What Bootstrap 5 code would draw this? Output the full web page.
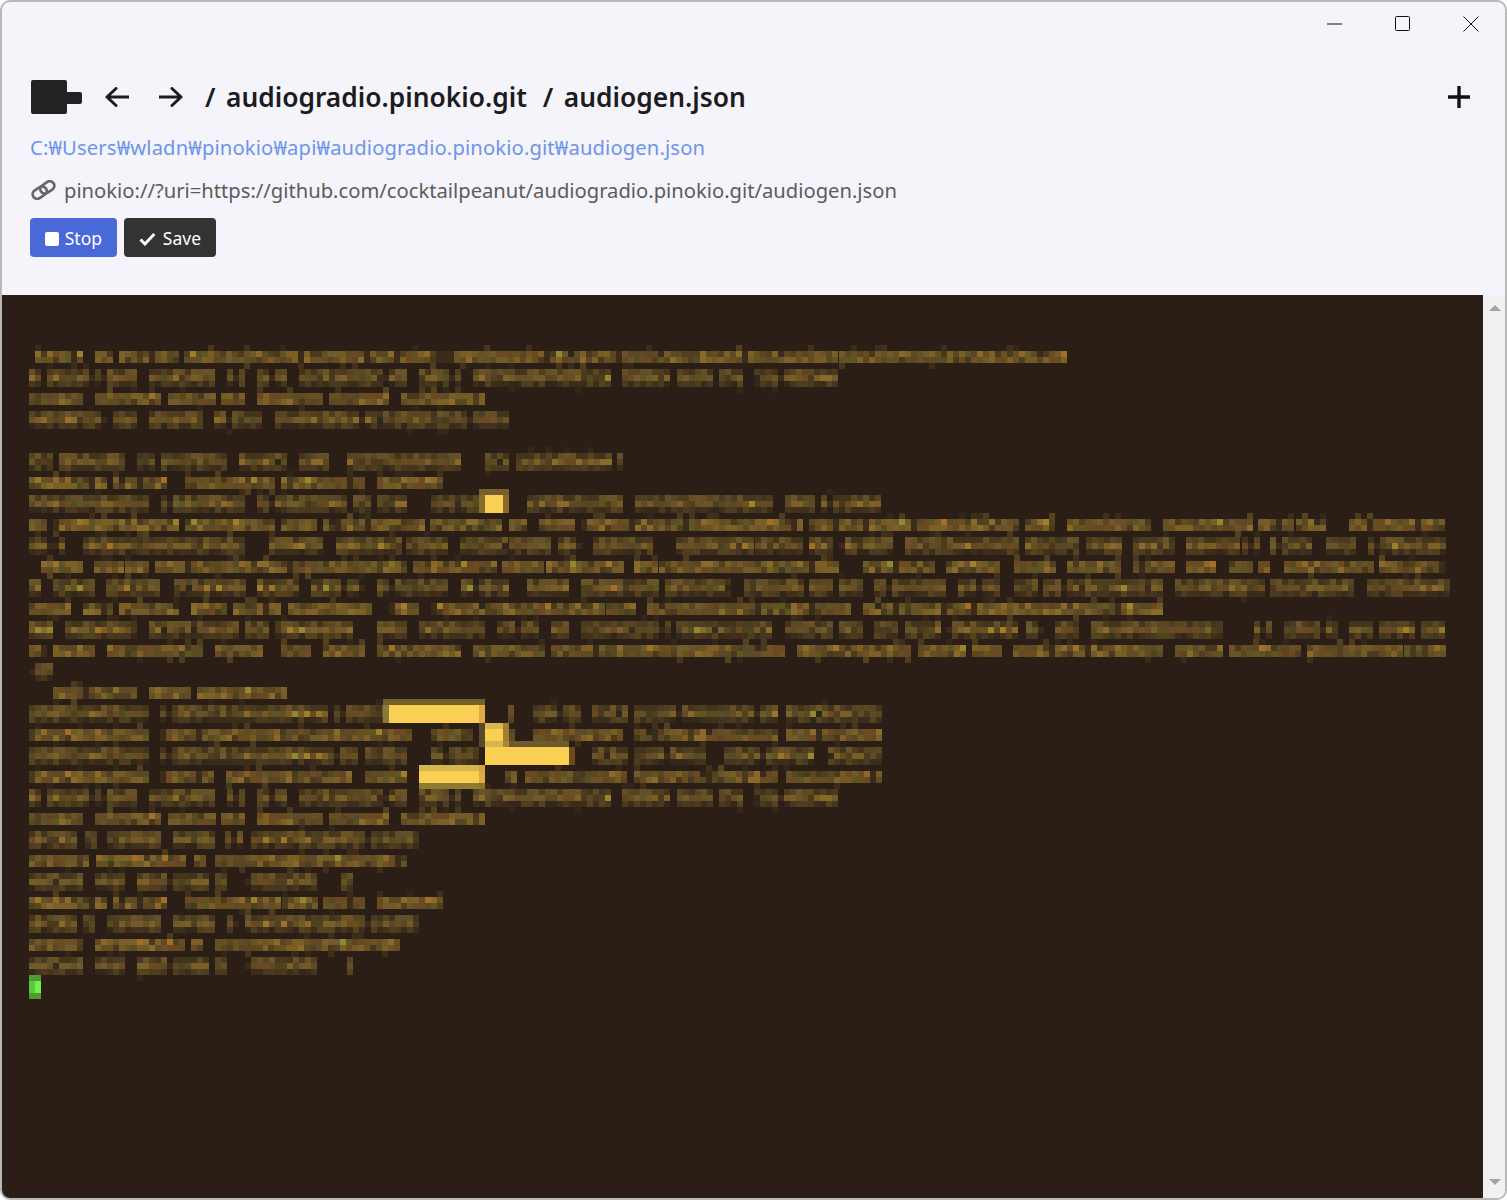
<!doctype html>
<html lang="en">
<head>
<meta charset="utf-8">
<title>audiogen.json</title>
<link href="https://cdn.jsdelivr.net/npm/bootstrap@5.3.0/dist/css/bootstrap.min.css" rel="stylesheet">
<style>
html,body{height:100%;margin:0;overflow:hidden;background:#fff}
body{font-family:"Noto Sans","Noto Sans CJK KR",sans-serif}
.win{height:1200px;border:2px solid #b9b9b9;border-radius:10px;background:#f4f4fa;overflow:hidden;position:relative}
.tick{position:absolute;background:#555;z-index:3}
.capbar{height:44px;padding-top:0}
.capbtn{width:68px;height:43px;padding:0;border:0;background:transparent}
.head{padding:16px 22px 38px 28px}
.toprow{height:70px;margin-bottom:4px}
.logo{width:51px;height:34px;margin-left:1px;flex:none}
.arrow{width:24px;height:20px;flex:none}
.arrow-a{margin-left:23px}
.arrow-b{margin-left:30px}
.crumbs{margin:0 0 0 22px;font-size:26.350px;font-weight:600;color:#1c1c1e;white-space:pre;line-height:36px}
.slash{margin-right:10.500px}
.slash-two{margin-left:16px}
.addbtn{width:22px;height:22px;margin-right:13px}
.pathlink{display:block;font-size:20.200px;letter-spacing:.14px;line-height:28px;color:#6e95ea;text-decoration:none;margin-top:-3px}
.urirow{margin-top:15px;height:28px;color:#5c5c5c;font-size:20.200px}
.chain{width:25px;height:20px;margin:0 8px 0 1px;flex:none}
.actions{margin-top:14px;gap:7px}
.act{height:39px;font-size:17.500px;line-height:1;border:0;border-radius:4px;color:#fff;padding:3px 15px 0;display:flex;align-items:center}
.act-stop{background:#4a69d8;width:87px}
.act-stop:hover{background:#4a69d8;color:#fff}
.act-save{background:#333;width:92px}
.act-save:hover{background:#333;color:#fff}
.sq{width:14px;height:14px;background:#fff;border-radius:2px;margin-right:6px}
.chk{width:17px;height:14px;margin-right:7px}
.termwrap{height:903px}
.term{background:#2b1e17;flex:1 1 auto;overflow:hidden}
.term svg{display:block;width:1481px;height:903px}
.sbar{width:22px;background:#f1f1f1;flex:none}
.sarrow{width:12px;height:6px;margin:0 0 0 6px}
.sarrow-up{margin-top:10px}
.sarrow-down{margin-bottom:13px}
</style>
</head>
<body>
<div class="win d-flex flex-column">
  <span class="tick" style="left:37px;top:-2px;width:1px;height:2px"></span>
  <span class="tick" style="left:304px;top:-2px;width:1px;height:2px"></span>
  <span class="tick" style="left:361px;top:-2px;width:1px;height:2px"></span>
  <span class="tick" style="left:-2px;top:35px;width:2px;height:1px"></span>
  <span class="tick" style="left:-2px;top:41px;width:2px;height:1px"></span>
  <span class="tick" style="left:-2px;top:47px;width:2px;height:1px"></span>
  <span class="tick" style="left:-2px;top:274px;width:2px;height:3px"></span>

  <div class="capbar d-flex justify-content-end">
    <button class="capbtn d-flex align-items-center justify-content-center" aria-label="Minimize"><svg width="16" height="16" viewBox="0 0 16 16"><path d="M0 8h15" stroke="#111" fill="none"/></svg></button>
    <button class="capbtn d-flex align-items-center justify-content-center" aria-label="Maximize"><svg width="16" height="16" viewBox="0 0 16 16"><rect x=".5" y=".5" width="14" height="14" rx="1" stroke="#111" fill="none"/></svg></button>
    <button class="capbtn d-flex align-items-center justify-content-center" aria-label="Close"><svg width="16" height="16" viewBox="0 0 16 16"><path d="M.5.5l15 15M15.500.5l-15 15" stroke="#111" fill="none"/></svg></button>
  </div>

  <div class="head">
    <div class="toprow d-flex align-items-center">
      <svg class="logo" viewBox="0 0 51 34"><path d="M2 0h32a2 2 0 0 1 2 2v10h13a2 2 0 0 1 2 2v8a2 2 0 0 1-2 2H36v8a2 2 0 0 1-2 2H2a2 2 0 0 1-2-2V2a2 2 0 0 1 2-2z" fill="#222"/></svg>
      <svg class="arrow arrow-a" viewBox="0 0 24 20"><path d="M23.500 10H2M11 1.500 2 10l9 8.500" fill="none" stroke="#1c1c1e" stroke-width="3" stroke-linecap="round" stroke-linejoin="round"/></svg>
      <svg class="arrow arrow-b" viewBox="0 0 24 20"><path d="M.5 10H22M13 1.500l9 8.500-9 8.500" fill="none" stroke="#1c1c1e" stroke-width="3" stroke-linecap="round" stroke-linejoin="round"/></svg>
      <h1 class="crumbs"><span class="slash">/</span><span>audiogradio.pinokio.git</span><span class="slash slash-two">/</span><span>audiogen.json</span></h1>
      <svg class="addbtn ms-auto" viewBox="0 0 22 22"><path d="M11 1v20M1 11h20" stroke="#111" stroke-width="3.400" stroke-linecap="round" fill="none"/></svg>
    </div>
    <a class="pathlink" href="#">C:₩Users₩wladn₩pinokio₩api₩audiogradio.pinokio.git₩audiogen.json</a>
    <div class="urirow d-flex align-items-center">
      <svg class="chain" viewBox="0 0 25 20"><g fill="none" stroke="#666" stroke-width="2.700"><rect x="-7.500" y="-4.500" width="15" height="9" rx="4.500" transform="translate(8.700 12.600) rotate(-33)"/><rect x="-7.500" y="-4.500" width="15" height="9" rx="4.500" transform="translate(16.300 7.400) rotate(-33)"/></g></svg>
      <span>pinokio://?uri=https://github.com/cocktailpeanut/audiogradio.pinokio.git/audiogen.json</span>
    </div>
    <div class="actions d-flex">
      <button class="btn act act-stop"><span class="sq"></span>Stop</button>
      <button class="btn act act-save"><svg class="chk" viewBox="0 0 17 14"><path d="M1.500 7.500 6 12 15.500 2" fill="none" stroke="#fff" stroke-width="3"/></svg>Save</button>
    </div>
  </div>

  <div class="termwrap d-flex">
    <div class="term"><svg id="screen" viewBox="2 295 1481 903" shape-rendering="crispEdges" aria-hidden="true"></svg></div>
    <div class="sbar d-flex flex-column justify-content-between">
      <svg class="sarrow sarrow-up" viewBox="0 0 12 6"><path d="M0 6h12L6 0z" fill="#a3a3a3"/></svg>
      <svg class="sarrow sarrow-down" viewBox="0 0 12 6"><path d="M0 0h12L6 6z" fill="#a3a3a3"/></svg>
    </div>
  </div>
</div>

<script src="https://cdn.jsdelivr.net/npm/bootstrap@5.3.0/dist/js/bootstrap.bundle.min.js"></script>
<script>
(function(){
  var A=[29,41,47,137,149,214,227,245,257,287,299,406,419,461,473,611,622,665,677,708,719,743,754,838];
  var B=[29,83,95,161,168,214,221,245,257,322,329,389,401,482];
  var LINES=[
  [351,2,[35,83,95,113,119,178,184,833,839,1066]],
  [369,3,A,1],
  [393,2,B,2],
  [411,3,[29,107,113,137,149,203,214,257,275,509]],
  [453,3,[29,53,59,125,137,150,161,227,239,287,299,329,347,461,485,507,516,611,617,623]],
  [477,2,[29,107,113,167,185,275,281,318,323,365,377,443],3],
  [495,3,[29,149,161,245,257,347,353,371,377,407,431,479,527,622,635,768,785,814,821,881],4],
  [519,2,[29,43,53,178,185,274,281,315,323,425,430,502,509,527,539,574,581,802,809,1019,1025,1053,1067,1151,1163,1251,1258,1289,1296,1326,1349,1445]],
  [537,3,[29,60,83,243,269,323,336,402,406,448,460,504,509,551,558,581,593,653,676,749,755,802,809,828,839,893,905,1014,1025,1079,1086,1121,1133,1170,1186,1235,1242,1258,1270,1312,1326,1354,1368,1445]],
  [561,2,[41,83,94,119,125,148,155,369,371,406,413,495,502,539,546,623,634,653,659,839,863,935,946,995,1014,1053,1067,1121,1133,1175,1186,1216,1229,1251,1258,1270,1284,1372,1379,1445]],
  [579,3,[29,41,53,94,106,160,174,246,257,299,311,364,377,402,406,448,461,504,527,569,581,658,665,728,744,802,809,832,839,863,874,912,916,946,958,995,1014,1035,1043,1163,1175,1263,1270,1354,1367,1410,1414,1445]],
  [603,2,[29,71,83,113,119,174,191,227,233,281,288,371,389,419,431,504,509,600,606,635,647,851,863,1163]],
  [621,3,[29,53,65,136,149,239,245,269,275,353,377,406,419,485,497,539,551,569,581,669,676,772,785,832,839,863,874,893,905,939,946,1014,1026,1043,1055,1079,1091,1223,1254,1270,1284,1335,1349,1368,1379,1414,1421,1445]],
  [645,2,[29,47,53,94,107,202,215,262,281,311,323,364,377,460,473,544,551,785,797,911,918,965,972,1000,1013,1163,1175,1223,1229,1300,1307,1398,1404,1445]],
  [663,3,[29,53]],
  [687,2,[53,136,149,190,197,286]],
  [705,3,[29,149,160,323,334,383,508,514,533,581,592,623,634,775,786,881],5],
  [729,2,[29,149,160,407,431,469,509,514,533,623,634,775,786,881],6],
  [747,3,[29,149,160,354,365,407,431,475,592,623,634,702,724,814,828,881],5],
  [771,2,[29,149,160,214,226,351,365,407,505,517,525,623,634,775,786,881],6],
  [789,3,A,1],
  [813,2,B,2],
  [831,3,[29,76,85,96,107,160,173,214,225,242,251,418],7],
  [855,2,[29,85,96,185,194,202,215,407],8],
  [873,3,[29,83,95,125,137,208,215,227,245,315,341,353],9],
  [897,2,[29,107,113,167,185,277,282,318,323,365,377,443],3],
  [915,3,[29,77,83,95,107,161,173,215,227,238,245,418],7],
  [939,2,[29,83,95,185,191,203,215,266,268,400],8],
  [957,3,[29,83,95,125,137,208,215,227,245,315,347,353],9]
  ];
  var STRONG=['#6b5327','#5e4b25','#735a26','#574a22','#7d6028','#6a4a22','#5f5524','#66501f','#6f5a2a','#4f4020','#7a5f24','#5a4722','#8a6a2a','#4a3a1d','#6b4a22','#5e4b25'];
  var RARE=['#a07f2a','#a36f27','#8f8a2f','#3b2a22','#2e281b','#9a7428'];
  var DIM=['#3d2e1c','#4a3a20','#54431f','#3a2b1b','#40301c','#463620','#4e3d1e','#33261a'];
  var MID=['#4f3f20','#5a4823','#4a3a20','#63502a','#43341c','#574522','#43341c','#6a5327'];
  var out=[];
  function px(x,y,w,h,c){out.push('<rect x="'+x+'" y="'+y+'" width="'+w+'" height="'+h+'" fill="'+c+'"/>');}
  function rng(s){return function(){s|=0;s=s+0x6D2B79F5|0;var t=Math.imul(s^s>>>15,1|s);t=t+Math.imul(t^t>>>7,61|t)^t;return((t^t>>>14)>>>0)/4294967296;};}
  LINES.forEach(function(l,i){
    var y=l[0],kind=l[1],seg=l[2],seed=l[3]?l[3]*7919:(i+11)*104729;
    var r=rng(seed),pick=function(a){return a[Math.floor(r()*a.length)];};
    for(var s=0;s<seg.length;s+=2){
      for(var x=seg[s];x<seg[s+1];x+=6){
        var skip=r()<0.04, rare=r()<0.045;
        var c0,c1,c2;
        if(kind===3){
          c0=pick(MID);c1=rare?pick(RARE):pick(STRONG);c2=pick(DIM);
          if(!skip){px(x,y,6,6,c0);px(x,y+6,6,6,c1);px(x,y+12,6,6,c2);}
          else{px(x,y+6,6,6,'#3a2b1b');}
          if(r()<0.05)px(x,y-6,6,6,'#34271a');
          if(r()<0.04)px(x,y+18,6,6,'#34271a');
        }else{
          c0=rare?pick(RARE):pick(STRONG);c1=pick(STRONG);
          if(!skip){px(x,y,6,6,c0);px(x,y+6,6,6,c1);}
          else{px(x,y,6,12,'#3a2b1b');}
          if(r()<0.1)px(x,y-6,6,6,pick(DIM));
          if(r()<0.08)px(x,y+12,6,6,pick(DIM));
        }
      }
    }
  });
  var Y='#f9d054';
  /* highlighted spans */
  px(485,495,18,18,Y);px(479,489,30,6,'#75602c');px(479,495,6,18,'#8a6a2c');px(503,495,6,18,'#8a6a2c');
  px(383,699,102,6,'#75602c');px(383,705,6,18,'#8a7838');px(389,705,90,18,Y);px(479,705,6,18,'#e2a846');
  px(479,723,6,24,'#5a4a28');px(485,723,18,6,'#d9b650');px(485,729,18,12,Y);px(485,741,18,6,'#d6b44e');px(503,723,6,18,'#a67c30');px(503,741,6,6,'#a68a38');
  px(509,741,60,6,'#6e5a2a');px(485,747,84,18,Y);px(569,747,6,18,'#6b4a1e');
  px(419,765,60,6,'#d6b44e');px(479,765,6,6,'#d6a040');px(419,771,60,12,Y);px(479,771,6,12,'#e2a846');px(419,783,60,6,'#8f7a35');px(479,783,6,6,'#8f7030');
  /* cursor */
  px(29,975,12,6,'#4f9a32');px(29,981,6,12,'#5ec63e');px(35,981,6,12,'#73f14b');px(29,993,12,6,'#4f9a32');
  document.getElementById('screen').innerHTML=out.join('');
})();
</script>
</body>
</html>
